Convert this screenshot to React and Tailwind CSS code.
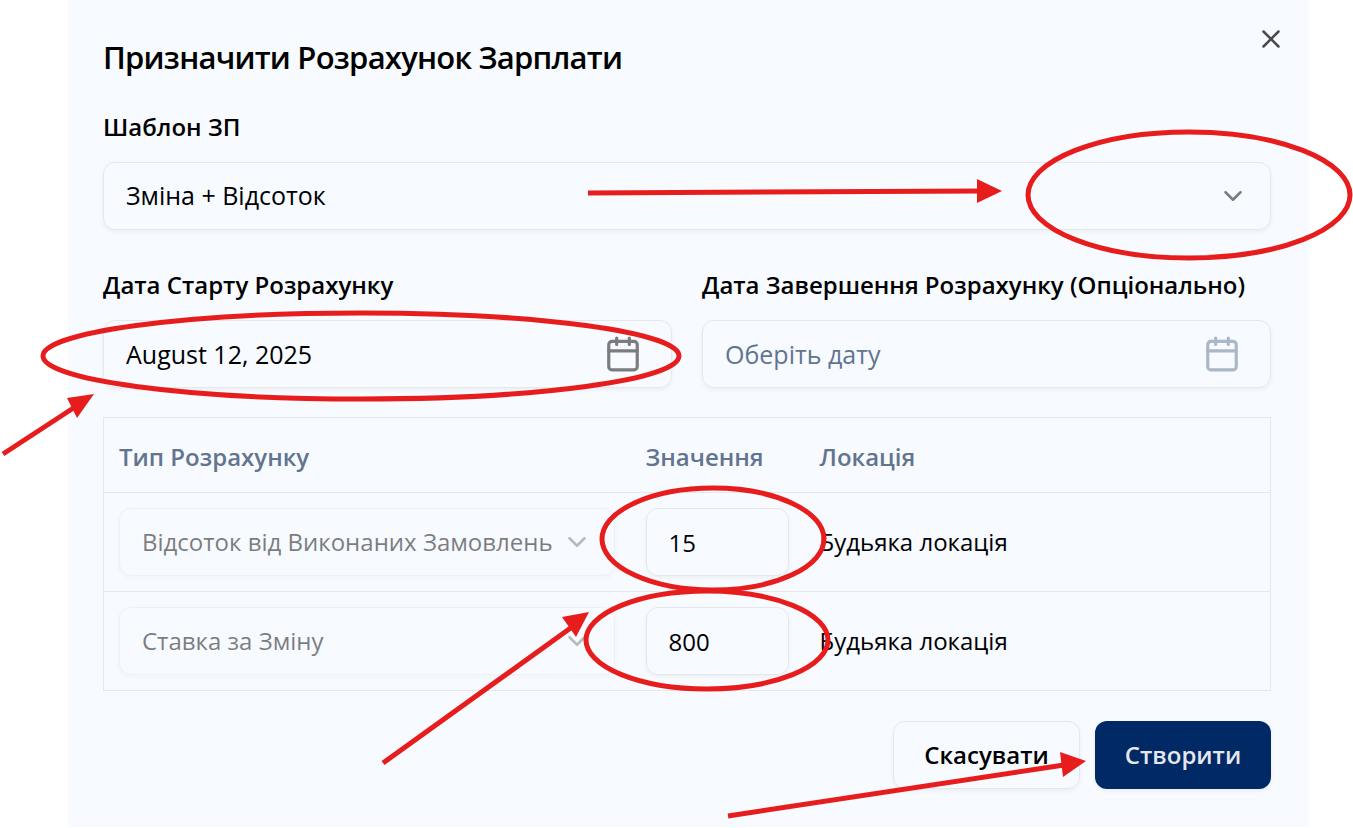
import React, { useState } from 'react';
import { Calendar, ChevronDown, X } from 'lucide-react';

const rows = [
  { id: 1, type: 'Відсоток від Виконаних Замовлень', value: '15', location: 'Будьяка локація' },
  { id: 2, type: 'Ставка за Зміну', value: '800', location: 'Будьяка локація' }
];

const arrows = [
  { id: 'template', line: [588, 193, 982, 191], head: '977,179 1002,191 977,203' },
  { id: 'date', line: [3, 454, 78, 405], head: '67,398 94,394 77,418' },
  { id: 'values', line: [383, 763, 572, 627], head: '562,617 589,612 576,637' },
  { id: 'create', line: [728, 816, 1064, 765], head: '1060,752 1086,761 1063,777' }
];

const ellipses = [
  { id: 'template', cx: 1189, cy: 195, rx: 161, ry: 63 },
  { id: 'date', cx: 361, cy: 356, rx: 318, ry: 43 },
  { id: 'percent', cx: 713, cy: 539, rx: 111, ry: 51 },
  { id: 'rate', cx: 707, cy: 640, rx: 121, ry: 49 }
];

const SelectField = ({ id, value, disabled, label }) => (
  <div className={disabled ? 'relative opacity-50 text-2xl' : 'relative text-[25px]'}>
    <select
      id={id}
      aria-label={label}
      disabled={disabled}
      defaultValue={value}
      className="block w-full h-17 pl-[22px] pr-12 appearance-none rounded-xl border border-gray-200 bg-transparent shadow-[0_2px_4px_rgb(0_0_0/0.05)] text-black"
    >
      <option>{value}</option>
    </select>
    <ChevronDown size={30} className="absolute right-[23px] top-[19px] text-black opacity-50 pointer-events-none" />
  </div>
);

const DateField = ({ id, label, value, placeholder }) => (
  <div>
    <label htmlFor={id} className="block leading-9 font-semibold text-black whitespace-nowrap">{label}</label>
    <div className="relative mt-[17px] text-[25px]">
      <input
        id={id}
        type="text"
        defaultValue={value}
        placeholder={placeholder}
        className="block w-full h-17 pl-[22px] pr-20 rounded-xl border border-gray-200 bg-transparent shadow-[0_2px_4px_rgb(0_0_0/0.05)] text-black placeholder:text-slate-500"
      />
      <Calendar
        size={38}
        className={`absolute right-[30px] top-[15px] opacity-50 pointer-events-none ${value ? 'text-black' : 'text-slate-500'}`}
      />
    </div>
  </div>
);

const Annotations = () => (
  <svg
    width="1353"
    height="828"
    viewBox="0 0 1353 828"
    className="absolute left-0 top-0 max-w-none pointer-events-none"
    aria-hidden="true"
  >
    {ellipses.map(({ id, ...shape }) => (
      <ellipse key={id} {...shape} fill="none" stroke="#e71d1d" strokeWidth="5" />
    ))}
    {arrows.map(({ id, line, head }) => (
      <g key={id}>
        <line x1={line[0]} y1={line[1]} x2={line[2]} y2={line[3]} stroke="#e71d1d" strokeWidth="5" />
        <polygon points={head} fill="#e71d1d" />
      </g>
    ))}
  </svg>
);

const App = () => {
  const [values, setValues] = useState(rows.map(row => row.value));

  const changeValue = (index, value) => {
    setValues(values.map((item, i) => (i === index ? value : item)));
  };

  return (
    <div className="relative bg-white pl-17 pr-11 overflow-hidden font-['Open_Sans','Noto_Sans',sans-serif] text-2xl">
      <form className="bg-[#f7faff] pl-[35px] pr-[38px] pt-[35px] pb-[38px]" onSubmit={e => e.preventDefault()}>
        <div className="relative">
          <h1 className="text-[31px] leading-11 font-semibold tracking-tight text-black">Призначити Розрахунок Зарплати</h1>
          <button type="button" aria-label="Закрити" className="absolute -right-[15px] -top-[11px] text-black opacity-70">
            <X size={30} />
          </button>
        </div>

        <label htmlFor="template" className="block mt-[30px] mb-[17px] leading-9 font-semibold text-black">Шаблон ЗП</label>
        <SelectField id="template" value="Зміна + Відсоток" />

        <div className="grid grid-cols-2 gap-[30px] mt-[37px]">
          <DateField id="start" label="Дата Старту Розрахунку" value="August 12, 2025" />
          <DateField id="end" label="Дата Завершення Розрахунку (Опціонально)" placeholder="Оберіть дату" />
        </div>

        <table className="w-full mt-[29px] table-fixed border border-gray-200 border-collapse text-left">
          <colgroup>
            <col className="w-[526px]" />
            <col className="w-[174px]" />
            <col />
          </colgroup>
          <thead>
            <tr className="h-[75px] border-b border-gray-200 text-slate-500">
              <th className="px-[15px] pb-1 pt-2 font-semibold">Тип Розрахунку</th>
              <th className="px-4 pb-1 pt-2 font-semibold">Значення</th>
              <th className="px-4 pb-1 pt-2 font-semibold">Локація</th>
            </tr>
          </thead>
          <tbody>
            {rows.map((row, index) => (
              <tr key={row.id} className="h-[99px] border-b border-gray-200">
                <td className="px-[15px]">
                  <SelectField id={`type-${row.id}`} label="Тип Розрахунку" value={row.type} disabled />
                </td>
                <td className="pl-4 pr-[15px]">
                  <input
                    type="text"
                    inputMode="numeric"
                    aria-label="Значення"
                    value={values[index]}
                    onChange={e => changeValue(index, e.target.value)}
                    className="block w-full h-17 px-[22px] rounded-xl border border-gray-200 bg-transparent shadow-[0_2px_4px_rgb(0_0_0/0.05)] text-black"
                  />
                </td>
                <td className="px-4 text-black">{row.location}</td>
              </tr>
            ))}
          </tbody>
        </table>

        <div className="flex justify-end gap-[15px] mt-[30px]">
          <button type="button" className="h-17 w-[187px] rounded-xl border border-gray-200 shadow-[0_2px_4px_rgb(0_0_0/0.05)] font-semibold text-black">Скасувати</button>
          <button type="submit" className="h-17 w-[176px] rounded-xl bg-[#002966] shadow-[0_2px_4px_rgb(0_0_0/0.05)] font-semibold text-gray-200">Створити</button>
        </div>
      </form>
      <Annotations />
    </div>
  );
};

export default App;
